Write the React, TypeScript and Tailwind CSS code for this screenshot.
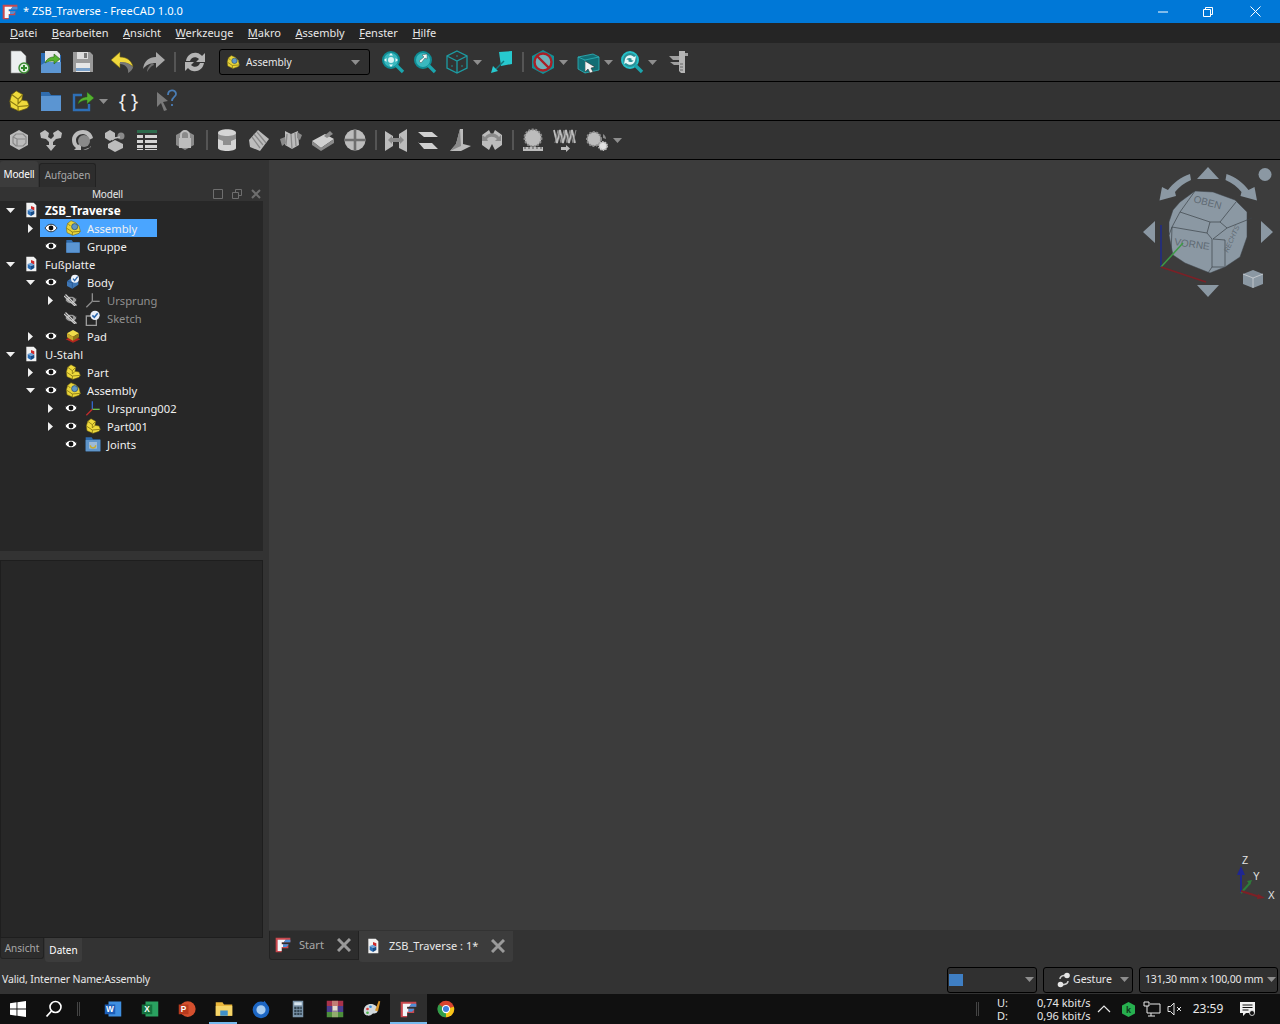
import React from "react";

const MENUS = ["Datei", "Bearbeiten", "Ansicht", "Werkzeuge", "Makro", "Assembly", "Fenster", "Hilfe"];

function Svg({ size = 24, children }: { size?: number; children: React.ReactNode }) {
  return (
    <svg width={size} height={size} viewBox="0 0 24 24" className="block shrink-0">
      {children}
    </svg>
  );
}

function FreeCadLogo({ size = 16 }: { size?: number }) {
  return (
    <Svg size={size}>
      <path d="M1 1h22v7H10v3h10v6H10v6H1z" fill="#c9484e" />
      <path d="M4 4h12l-3 4h-3v3h2v4h-2v6H4z" fill="#f4f6f8" />
      <path d="M16 4h7v4H13zM12 11h8v1l-3 3h-5z" fill="#4d8fd6" />
    </Svg>
  );
}

function DocIcon() {
  return (
    <Svg size={16}>
      <path d="M5 1h11l4 4v18H5z" fill="#f2f2f2" />
      <path d="M12 6l5 2v5l-5-2z" fill="#cf2a2a" />
      <path d="M7 12l5-2 5 3-5 2z" fill="#6da3da" />
      <path d="M7 12l5 3v6l-5-3z" fill="#2a6db5" />
      <path d="M12 15l5-2v5l-5 3z" fill="#174a85" />
    </Svg>
  );
}

function Eye() {
  return (
    <svg width="14" height="10" viewBox="0 0 14 10" className="block">
      <path d="M1 5c3-5 9-5 12 0-3 5-9 5-12 0z" fill="#fff" stroke="#111" strokeWidth="0.8" />
      <circle cx="7" cy="5" r="2.4" fill="#111" />
    </svg>
  );
}

function EyeOff() {
  return (
    <svg width="14" height="12" viewBox="0 0 14 12" className="block">
      <path d="M1 6c3-5 9-5 12 0-3 5-9 5-12 0z" fill="#9a9a9a" stroke="#222" strokeWidth="0.8" />
      <circle cx="7" cy="6" r="2.2" fill="#333" />
      <path d="M1.500 0.500l11 11M0 2l11 10" stroke="#cfcfcf" strokeWidth="1.2" />
    </svg>
  );
}

function PartIcon({ size = 16 }: { size?: number }) {
  return (
    <Svg size={size}>
      <path d="M9 1l7 4-1 6 6 1 2 5-2 3-9 3-9-4-1-7 2-7z" fill="#efda3c" stroke="#6b5f10" strokeWidth="0.8" />
      <path d="M4 5l7 5 5-5M11 10v5l4-4M2 12l9 6 12-1M11 18v5" fill="none" stroke="#8a7a12" strokeWidth="1.300" />
    </Svg>
  );
}

function AssemblyIcon({ size = 16 }: { size?: number }) {
  return (
    <Svg size={size}>
      <path d="M9 1l7 3 5 5 2 8-2 3-9 3-9-4-1-7 2-7z" fill="#e8d43a" stroke="#6b5f10" strokeWidth="0.8" />
      <path d="M2 12l9 6 12-1M11 18v5M4 5l4 4" fill="none" stroke="#8a7a12" strokeWidth="1.300" />
      <circle cx="14.500" cy="10" r="4.600" fill="#5f97c4" stroke="#23456a" />
    </Svg>
  );
}

function FolderIcon({ size = 16 }: { size?: number }) {
  return (
    <Svg size={size}>
      <path d="M2 3h8l2 3h10v16H2z" fill="#2f6cae" />
      <path d="M2 7h20v15H2z" fill="#5b95d2" />
    </Svg>
  );
}

function BodyIcon() {
  return (
    <Svg size={16}>
      <path d="M3 11l8-6 9 2v9l-9 6-8-4z" fill="#3e76b5" />
      <path d="M11 13v9M3 11l8 2 9-6" fill="none" stroke="#214f85" strokeWidth="1" />
      <circle cx="15" cy="7" r="6" fill="#f1f5fb" />
      <path d="M12 7l2.500 3L19 4" fill="none" stroke="#2a66ad" strokeWidth="2" />
    </Svg>
  );
}

function SketchIcon() {
  return (
    <Svg size={16}>
      <path d="M2 9h15v14H2z" fill="none" stroke="#9b9b9b" strokeWidth="2" />
      <circle cx="15" cy="8" r="7" fill="#e9eef6" />
      <path d="M11 8l3 3 5-6" fill="none" stroke="#2a66ad" strokeWidth="2.4" />
    </Svg>
  );
}

function PadIcon() {
  return (
    <Svg size={16}>
      <path d="M1 17l11-5 11 5-11 5z" fill="#b3261e" />
      <path d="M3 8l9-5 9 5-9 5z" fill="#f0dc4a" />
      <path d="M3 8v6l9 5v-6z" fill="#c7a92a" />
      <path d="M21 8v6l-9 5v-6z" fill="#8f7a18" />
    </Svg>
  );
}

function OriginIcon({ color }: { color?: boolean }) {
  return (
    <Svg size={16}>
      <path d="M11 2v12" stroke={color ? "#3565c9" : "#8c8c8c"} strokeWidth="2" />
      <path d="M11 14h11" stroke={color ? "#6cc04a" : "#8c8c8c"} strokeWidth="2" />
      <path d="M11 14L2 23" stroke={color ? "#c12c2c" : "#8c8c8c"} strokeWidth="2" />
    </Svg>
  );
}

function JointsIcon() {
  return (
    <Svg size={16}>
      <path d="M1 2h9l2 3h11v18H1z" fill="#2f6cae" />
      <path d="M1 6h22v17H1z" fill="#5f95c9" />
      <path d="M6 9h12v10H6z" fill="#9dbad6" />
      <path d="M8 14a4 4 0 008 0" fill="none" stroke="#c7ad2c" strokeWidth="2" />
    </Svg>
  );
}

function Arrow({ open }: { open: boolean }) {
  return open ? (
    <svg width="9" height="5" viewBox="0 0 9 5" className="block">
      <path d="M0 0h9L4.500 5z" fill="#f0f0f0" />
    </svg>
  ) : (
    <svg width="5" height="9" viewBox="0 0 5 9" className="block">
      <path d="M0 0v9l5-4.500z" fill="#f0f0f0" />
    </svg>
  );
}

/* --- toolbar icons --- */
function NewDoc() {
  return (
    <Svg>
      <path d="M4 1h10l5 5v17H4z" fill="#eceff0" stroke="#8b8b8b" strokeWidth="0.6" />
      <circle cx="17" cy="18" r="5" fill="#dfeedd" stroke="#3c8a33" strokeWidth="1.4" />
      <path d="M14 18h6M17 15v6" stroke="#2f8a2a" strokeWidth="2" />
    </Svg>
  );
}
function OpenDoc() {
  return (
    <Svg>
      <path d="M2 3h8l2 2h10v18H2z" fill="#2d6eb5" />
      <path d="M6 1h12l3 3v9H6z" fill="#e7e7e7" />
      <path d="M2 15l5-3h15v11H2z" fill="#5d97d3" />
      <path d="M6 13c2-5 6-6 9-6V4l6 5-6 5v-3c-3 0-6 0-9 2z" fill="#57b22f" stroke="#245f18" strokeWidth="0.6" />
    </Svg>
  );
}
function SaveDoc() {
  return (
    <Svg>
      <path d="M2 2h17l3 3v17H2z" fill="#9a9a9a" />
      <path d="M6 2h11v7H6z" fill="#dcdcdc" />
      <path d="M13 3h3v5h-3z" fill="#777" />
      <path d="M5 13h14v9H5z" fill="#e6e6e6" />
      <path d="M5 18h14v3H5z" fill="#7aa0c8" />
    </Svg>
  );
}
function Undo() {
  return (
    <Svg>
      <path d="M1 10l9-8v5c7 0 12 4 13 10-3-3-7-5-13-4v5z" fill="#f0d83c" stroke="#6d6116" strokeWidth="0.6" />
      <path d="M10 12c5 0 9 1 13 5 0 2-3 5-5 6 1-5-3-9-8-9z" fill="#777" />
    </Svg>
  );
}
function Redo() {
  return (
    <Svg>
      <path d="M23 10l-9-8v5C7 7 2 11 1 19c3-4 7-6 13-6v5z" fill="#a8a8a8" />
      <path d="M5 22c0-4 3-8 6-9l1 2c-3 1-5 4-7 7z" fill="#6e6e6e" />
    </Svg>
  );
}
function Refresh() {
  return (
    <Svg>
      <path d="M3 11C4 5 9 2 14 3c2 0 4 2 5 3l3-3v9h-9l3-3c-3-3-8-2-9 2zM21 13c-1 6-6 9-11 8-2 0-4-2-5-3l-3 3v-9h9l-3 3c3 3 8 2 9-2z" fill="#b5b5b5" />
    </Svg>
  );
}
function FitAll() {
  return (
    <Svg>
      <circle cx="10" cy="10" r="8" fill="#3ab8bf" stroke="#0f8c94" strokeWidth="2" />
      <path d="M15 15l7 7" stroke="#1ca5ad" strokeWidth="3.4" />
      <circle cx="10" cy="10" r="3" fill="#d9f3f4" />
      <path d="M10 3l2 2.500H8zM10 17l2-2.500H8zM3 10l2.500-2v4zM17 10l-2.500-2v4z" fill="#e5f8f8" />
    </Svg>
  );
}
function FitSel() {
  return (
    <Svg>
      <circle cx="10" cy="10" r="8" fill="#3ab8bf" stroke="#0f8c94" strokeWidth="2" />
      <path d="M15 15l7 7" stroke="#1ca5ad" strokeWidth="3.4" />
      <path d="M14 4v5l-2-1-4 5-2-2 5-4-2-2z" fill="#eef9f9" stroke="#333" strokeWidth="0.4" />
    </Svg>
  );
}
function IsoCube() {
  return (
    <Svg>
      <path d="M12 1l10 5v12l-10 5-10-5V6z M2 6l10 5 10-5M12 11v12" fill="none" stroke="#1d9ca3" strokeWidth="1.3" />
      <circle cx="12" cy="6" r="0.8" fill="#1d9ca3" />
      <circle cx="7" cy="16" r="0.8" fill="#1d9ca3" />
      <circle cx="17" cy="16" r="0.8" fill="#1d9ca3" />
    </Svg>
  );
}
function PlaneArrow() {
  return (
    <Svg>
      <path d="M9 2l13-1v13l-11 2z" fill="#27c9cf" />
      <path d="M14 11L4 21" stroke="#12757b" strokeWidth="1.5" />
      <path d="M1 23l2-7 5 5z" fill="#27c9cf" />
    </Svg>
  );
}
function NoSign() {
  return (
    <Svg>
      <path d="M12 0l11 6v12l-11 6-11-6V6z" fill="#148e95" />
      <circle cx="12" cy="12" r="8.500" fill="#6fb2b9" stroke="#a91f25" strokeWidth="2.400" />
      <path d="M6 6l12 12" stroke="#a91f25" strokeWidth="2.400" />
    </Svg>
  );
}
function CubeCursor() {
  return (
    <Svg>
      <path d="M2 7l15-3 6 3v13l-14 3-7-4z" fill="#136d74" stroke="#2db5bb" strokeWidth="0.8" />
      <path d="M2 7l7 3 14-3M9 10v13" fill="none" stroke="#2db5bb" strokeWidth="0.8" />
      <path d="M9 11l10 6-4 1 2 4-3 1-2-4-3 3z" fill="#f1f1f1" stroke="#222" strokeWidth="0.5" />
    </Svg>
  );
}
function SyncZoom() {
  return (
    <Svg>
      <circle cx="10" cy="10" r="8" fill="#2a8f96" stroke="#26c1c8" strokeWidth="2" />
      <path d="M15 15l7 7" stroke="#1ca5ad" strokeWidth="3.400" />
      <path d="M5 9c1-4 6-5 9-2l2-1-1 5-4-1 1-1c-2-2-5-1-6 1zM15 11c-1 4-6 5-9 2l-2 1 1-5 4 1-1 1c2 2 5 1 6-1z" fill="#e5f8f8" />
    </Svg>
  );
}
function Caliper() {
  return (
    <Svg>
      <path d="M13 1h6v22h-4l-2-2z" fill="#b5b5b5" />
      <path d="M3 6h10v4H7zM4 12h9v3H8zM19 3h3v3h-3z" fill="#a0a0a0" />
      <path d="M14 14h3M14 17h3M14 20h3" stroke="#666" strokeWidth="1" />
    </Svg>
  );
}
function ShareArrow() {
  return (
    <Svg>
      <path d="M18 15v6H3V6h8" fill="none" stroke="#2e6fb6" strokeWidth="2.400" />
      <path d="M7 15c1-5 5-7 9-7V3l7 6-7 6v-4c-3 0-6 1-9 4z" fill="#55b130" stroke="#255f18" strokeWidth="0.5" />
    </Svg>
  );
}
function WhatsThis() {
  return (
    <Svg>
      <path d="M2 3l11 9-5 1 4 8-3 1-3-8-4 4z" fill="#7a7a7a" />
      <path d="M13 6c0-6 8-6 8-1 0 3-4 3-4 7M17 15v2" fill="none" stroke="#4a7db5" strokeWidth="1.800" />
    </Svg>
  );
}

const G = "#bcbcbc";
const GD = "#8a8a8a";

function GrayCube() {
  return (
    <Svg>
      <path d="M12 2l9 5v10l-9 5-9-5V7z" fill={G} />
      <path d="M9 6h7l3 3v6l-3 3H9l-3-3V9zM6 9l4 2h8M10 11v7" fill="none" stroke={GD} strokeWidth="1.200" />
    </Svg>
  );
}
function GrayBranch() {
  return (
    <Svg>
      <path d="M1 5l5-3 4 3-1 4 3 2 3-3-1-3 5-3 4 3-1 5-5 1-3 3v3h3l-5 6-5-6h3v-3L7 11 2 10z" fill={G} />
    </Svg>
  );
}
function GrayCycle() {
  return (
    <Svg>
      <path d="M12 2c5 0 9 3 10 8l-4 2c-1-4-3-6-6-6-4 0-7 3-7 6 0 2 1 4 2 5l3-2v7H3l2-2c-3-2-4-5-4-8C1 6 6 2 12 2z" fill={G} />
      <circle cx="13" cy="13" r="6" fill={GD} />
      <path d="M20 13v5c-2 3-5 4-8 4l8-3z" fill={G} />
    </Svg>
  );
}
function GrayParts() {
  return (
    <Svg>
      <path d="M7 2l5 3v5l-5 3-5-3V5z" fill={G} />
      <circle cx="18" cy="8" r="3.500" fill={GD} />
      <path d="M12 12l8 4v4l-8 4-7-4v-4z" fill={G} />
      <path d="M9 12l3-2 5-1" stroke={G} strokeWidth="1.500" fill="none" />
    </Svg>
  );
}
function GrayTable() {
  return (
    <Svg>
      <path d="M2 2h20v3H2z" fill="#2c6b4c" />
      <path d="M2 7h6v3H2zM10 7h12v3H10zM2 12h6v3H2zM10 12h12v3H10zM2 17h6v3H2zM10 17h12v3H10zM2 21h6v1H2zM10 21h12v1H10z" fill="#d5d5d5" />
    </Svg>
  );
}
function GrayLock() {
  return (
    <Svg>
      <path d="M12 2l9 5v10l-9 5-9-5V7z" fill={GD} />
      <path d="M8 10V7a4 4 0 018 0v3" fill="none" stroke={G} strokeWidth="2" />
      <path d="M6 10h12v10H6z" fill={G} />
    </Svg>
  );
}
function GrayCyl() {
  return (
    <Svg>
      <path d="M3 5c0-5 18-5 18 0v15c0 4-18 4-18 0z" fill="#d5d5d5" />
      <path d="M3 5c0 4 18 4 18 0v6l-5 2v4H8v-4l-5-2z" fill="#8f8f8f" />
    </Svg>
  );
}
function GrayLathe() {
  return (
    <Svg>
      <path d="M2 12l9-10 11 9-9 12-10-4z" fill={G} />
      <path d="M7 6l9 11M10 4l9 11M5 9l8 11" stroke={GD} strokeWidth="1.300" />
    </Svg>
  );
}
function GrayAxis() {
  return (
    <Svg>
      <path d="M6 3l6 3 7-3 1 14-7 4-7-4z" fill={G} />
      <path d="M12 6l1 15M8 6l-1 11M16 5l1 13" stroke={GD} strokeWidth="1.300" />
      <path d="M1 11l5-2 1 6-4 3zM18 4l5 3-2 5-3-2z" fill={GD} />
    </Svg>
  );
}
function GrayBoxes() {
  return (
    <Svg>
      <path d="M1 13L14 6l9 5-13 9z" fill="#d0d0d0" />
      <path d="M1 13l9 7v3L1 17zM23 11v4L10 23v-3z" fill={GD} />
      <path d="M13 8l6-5 3 3-6 4z" fill={GD} />
    </Svg>
  );
}
function GrayBall() {
  return (
    <Svg>
      <circle cx="12" cy="12" r="10.500" fill={G} />
      <path d="M1 12h22M12 1v22" stroke="#6f6f6f" strokeWidth="2.600" />
    </Svg>
  );
}
function GrayMirror() {
  return (
    <Svg>
      <path d="M1 3l8 5v10l-8 5zM23 1l-8 5v14l8 4z" fill={G} />
      <path d="M4 12l4-4v2h8V8l4 4-4 4v-2H8v2z" fill={GD} />
    </Svg>
  );
}
function GrayChamfer() {
  return (
    <Svg>
      <path d="M2 4h14l6 5H8zM2 14l14 1 6 6H8z" fill="#d0d0d0" />
      <path d="M8 9h14l-6 6H2z" fill="#2f2f2f" />
    </Svg>
  );
}
function GrayAngle() {
  return (
    <Svg>
      <path d="M12 1h3v15l8 2-10 5H2l6-7z" fill={G} />
      <path d="M12 1l-4 15-6 7 11-5z" fill={GD} />
    </Svg>
  );
}
function GrayFlex() {
  return (
    <Svg>
      <path d="M2 7l7-5 3 6v8l-3 6-7-5zM22 7l-7-5-3 6v8l3 6 7-5z" fill={G} />
      <path d="M5 9c4-5 10-5 14 0l2-2v6h-6l2-2c-3-3-8-3-10 0l1 2H2V7z" fill={GD} />
    </Svg>
  );
}
function GrayGear() {
  return (
    <Svg>
      <circle cx="12" cy="10" r="8.500" fill={G} stroke={GD} strokeWidth="2" strokeDasharray="2 1.500" />
      <path d="M2 19h20v4H2z" fill={G} />
      <path d="M4 19v2M8 19v2M12 19v2M16 19v2M20 19v2" stroke="#555" strokeWidth="1" />
    </Svg>
  );
}
function GraySpring() {
  return (
    <Svg>
      <path d="M1 2l3 13 3-13 3 13 3-13 3 13 3-13 3 13" fill="none" stroke={G} strokeWidth="1.800" />
      <path d="M2 15L5 2l3 13 3-13 3 13 3-13 3 13 3-13" fill="none" stroke={GD} strokeWidth="1.100" />
      <path d="M8 19h5v-2l4 3.500-4 3.500v-2H8z" fill={G} />
    </Svg>
  );
}
function GrayGears() {
  return (
    <Svg>
      <circle cx="9" cy="11" r="7" fill={G} stroke={GD} strokeWidth="2" strokeDasharray="2 1.500" />
      <circle cx="18" cy="18" r="4" fill="#e2e2e2" stroke={G} strokeWidth="2" strokeDasharray="1.500 1" />
      <path d="M18 6c2 1 3 3 3 5l-3-1z" fill={GD} />
    </Svg>
  );
}

function Btn({ children }: { children: React.ReactNode }) {
  return <div className="flex h-8 w-8 shrink-0 items-center justify-center">{children}</div>;
}

function Sep() {
  return <div className="ml-[4px] mr-[3px] h-[20px] w-[2px] shrink-0 bg-[#555555]" />;
}

function Drop() {
  return (
    <svg width="9" height="5" viewBox="0 0 9 5" className="block shrink-0">
      <path d="M0 0h9L4.500 5z" fill="#8e8e8e" />
    </svg>
  );
}

function Toolbar({ children }: { children: React.ReactNode }) {
  return <div className="flex h-[39px] items-center border-b border-black bg-[#333333] pl-[3px]">{children}</div>;
}

type Row = {
  level: 0 | 1 | 2;
  label: string;
  arrow?: "open" | "closed";
  eye?: "on" | "off";
  icon: React.ReactNode;
  bold?: boolean;
  selected?: boolean;
  dim?: boolean;
};

const INDENT = ["w-0", "w-5", "w-10"];

const ROWS: Row[] = [
  { level: 0, label: "ZSB_Traverse", arrow: "open", icon: <DocIcon />, bold: true },
  { level: 1, label: "Assembly", arrow: "closed", eye: "on", icon: <AssemblyIcon />, selected: true },
  { level: 1, label: "Gruppe", eye: "on", icon: <FolderIcon /> },
  { level: 0, label: "Fußplatte", arrow: "open", icon: <DocIcon /> },
  { level: 1, label: "Body", arrow: "open", eye: "on", icon: <BodyIcon /> },
  { level: 2, label: "Ursprung", arrow: "closed", eye: "off", icon: <OriginIcon />, dim: true },
  { level: 2, label: "Sketch", eye: "off", icon: <SketchIcon />, dim: true },
  { level: 1, label: "Pad", arrow: "closed", eye: "on", icon: <PadIcon /> },
  { level: 0, label: "U-Stahl", arrow: "open", icon: <DocIcon /> },
  { level: 1, label: "Part", arrow: "closed", eye: "on", icon: <PartIcon /> },
  { level: 1, label: "Assembly", arrow: "open", eye: "on", icon: <AssemblyIcon /> },
  { level: 2, label: "Ursprung002", arrow: "closed", eye: "on", icon: <OriginIcon color /> },
  { level: 2, label: "Part001", arrow: "closed", eye: "on", icon: <PartIcon /> },
  { level: 2, label: "Joints", eye: "on", icon: <JointsIcon /> },
];

function TreeRow({ row }: { row: Row }) {
  return (
    <div className="flex h-[18px] items-center">
      <div className={INDENT[row.level]} />
      <div className="flex h-[18px] w-5 items-center justify-center">
        {row.arrow && <Arrow open={row.arrow === "open"} />}
      </div>
      <div className={`flex h-[18px] items-center pr-5 ${row.selected ? "bg-[#4aa5ff]" : ""}`}>
        {row.eye && (
          <div className="flex w-[22px] justify-center">{row.eye === "on" ? <Eye /> : <EyeOff />}</div>
        )}
        <div className="flex w-[22px] justify-center">{row.icon}</div>
        <span
          className={`pl-[3px] pt-[1px] leading-[17px] ${row.bold ? "text-[11.7px] font-bold text-white" : "text-[11.2px]"} ${
            row.dim ? "text-[#8f8f8f]" : "text-[#f0f0f0]"
          }`}
        >
          {row.label}
        </span>
      </div>
    </div>
  );
}

function NaviCube() {
  const c = "#8b98a3";
  const e = "#3c4349";
  const t = "#5f6a73";
  return (
    <svg width="150" height="145" viewBox="0 0 150 145" className="block">
      <path d="M78 7l11 12H67z" fill={c} />
      <path d="M29.500 40.500L32 27l6 3c5-7 13-13 22-16l1 6c-7 3-12 7-16 12l1 4z" fill={c} />
      <path d="M127 40.500L124.500 27l-6 3c-5-7-13-13-22-16l-1 6c7 3 12 7 16 12l-1 4z" fill={c} />
      <path d="M13 72l12-11v22zM143 72l-12-11v22zM67 125h22l-11 12z" fill={c} />
      <circle cx="135" cy="14.500" r="6.500" fill={c} />
      <path d="M65 31l18 1 22 8 12 12v25l-7 20-15 10-15 6-25-10-12-8-4-20V62l4-12 7-8z" fill={c} stroke={e} strokeWidth="0.5" />
      <path
        d="M50 52L65 31M50 52l30 10h10l16-20M50 52l-8 15 35 6 3-11M42 67l-3 8M42 67l-1 28M77 73l5 6v28l-4 6M90 62l7 6 25-10M97 68L83 79l12 1v26M82 107h13"
        fill="none"
        stroke={e}
        strokeWidth="0.700"
      />
      <text transform="translate(63 42) rotate(15)" fontSize="10" fill={t} fontFamily="Liberation Sans, sans-serif">
        OBEN
      </text>
      <text transform="translate(44 85) rotate(8)" fontSize="10" fill={t} fontFamily="Liberation Sans, sans-serif">
        VORNE
      </text>
      <text transform="translate(98 93) rotate(-66)" fontSize="7" fontStyle="italic" fill={t} fontFamily="Liberation Sans, sans-serif">
        RECHTS
      </text>
      <path d="M31 107V65" stroke="#1e2a8a" strokeWidth="1.500" />
      <path d="M31 107L53 83" stroke="#3d9a46" strokeWidth="1.500" />
      <path d="M31 107l45 15" stroke="#7c2026" strokeWidth="1.500" />
      <path d="M113 114l10-4 10 4v10l-10 4-10-4z" fill={c} />
      <path d="M113 114l10 4 10-4M123 118v10" fill="none" stroke="#e5e5e5" strokeWidth="0.600" />
    </svg>
  );
}

function AxisCross() {
  return (
    <svg width="60" height="60" viewBox="0 0 60 60" className="block">
      <path d="M21 48V26" stroke="#1f2690" strokeWidth="2" />
      <path d="M21 21l-4 9h8z" fill="#1f2690" />
      <path d="M21 48l9-10" stroke="#2d7c3a" strokeWidth="2" />
      <path d="M32 35l-5 1 3 4z" fill="#2d7c3a" />
      <path d="M21 46l19 6" stroke="#7c2026" strokeWidth="2" />
      <path d="M45 53l-7-4-1 5z" fill="#7c2026" />
      <text x="22" y="19" fontSize="10" fill="#e5e5e5" fontFamily="Liberation Sans, sans-serif">Z</text>
      <text x="33" y="35" fontSize="10" fill="#e5e5e5" fontFamily="Liberation Sans, sans-serif">Y</text>
      <text x="48" y="54" fontSize="10" fill="#e5e5e5" fontFamily="Liberation Sans, sans-serif">X</text>
    </svg>
  );
}

function CloseX() {
  return (
    <svg width="14" height="14" viewBox="0 0 14 14" className="block shrink-0">
      <path d="M1 1l12 12M13 1L1 13" stroke="#9a9a9a" strokeWidth="3" />
    </svg>
  );
}

function StatusCombo({ className, children }: { className: string; children: React.ReactNode }) {
  return (
    <div className={`flex h-[26px] items-center rounded-[3px] border border-black bg-[#303030] ${className}`}>
      {children}
    </div>
  );
}

function TaskIcon({ children, className = "" }: { children: React.ReactNode; className?: string }) {
  return <div className={`flex h-[30px] w-[37px] shrink-0 items-center justify-center ${className}`}>{children}</div>;
}

function TaskLetterIcon({ bg, side, letter }: { bg: string; side: string; letter: string }) {
  return (
    <Svg size={18}>
      <path d="M6 2h17v20H6z" fill={side} />
      <path d="M1 6h14v13H1z" fill={bg} />
      <text x="8" y="16.500" textAnchor="middle" fontSize="11" fontWeight="700" fill="#fff" fontFamily="Liberation Sans, sans-serif">
        {letter}
      </text>
    </Svg>
  );
}

function Taskbar() {
  return (
    <div className="flex h-[30px] items-center bg-[#101010] text-[#e8e8e8]">
      <div className="flex h-[30px] w-[35px] items-center justify-center">
        <svg width="16" height="16" viewBox="0 0 16 16" className="block">
          <path d="M0 2.200l6.500-.9v6.200H0zM7.400 1.200L16 0v7.500H7.400zM0 8.500h6.500v6.200L0 13.800zM7.400 8.500H16V16l-8.600-1.200z" fill="#fff" />
        </svg>
      </div>
      <div className="flex h-[30px] w-[38px] items-center justify-center">
        <svg width="18" height="18" viewBox="0 0 18 18" className="block">
          <circle cx="10.500" cy="7" r="5.500" fill="none" stroke="#fff" strokeWidth="1.600" />
          <path d="M6.500 11L1.500 16.500" stroke="#fff" strokeWidth="1.800" />
        </svg>
      </div>
      <div className="ml-[4px] h-[14px] w-[3px] border-x border-[#444444]" />
      <div className="ml-[14px] flex">
        <TaskIcon>
          <TaskLetterIcon bg="#1d5eb8" side="#3f8fe0" letter="W" />
        </TaskIcon>
        <TaskIcon>
          <TaskLetterIcon bg="#14733e" side="#2aa160" letter="X" />
        </TaskIcon>
        <TaskIcon>
          <Svg size={18}>
            <circle cx="13" cy="12" r="10.500" fill="#d5502e" />
            <path d="M1 6h13v13H1z" fill="#b83a1d" />
            <text x="7.500" y="16.500" textAnchor="middle" fontSize="11" fontWeight="700" fill="#fff" fontFamily="Liberation Sans, sans-serif">
              P
            </text>
          </Svg>
        </TaskIcon>
        <TaskIcon className="relative">
          <Svg size={18}>
            <path d="M1 3h9l2 3h11v15H1z" fill="#e9b63b" />
            <path d="M1 8h22v13H1z" fill="#f6d568" />
            <path d="M7 14h10v7H7z" fill="#3f8fc9" />
          </Svg>
          <div className="absolute bottom-0 left-[4px] h-[2px] w-[28px] bg-[#76b9ed]" />
        </TaskIcon>
        <TaskIcon>
          <Svg size={20}>
            <circle cx="12" cy="13" r="10" fill="#1c66c4" />
            <path d="M16 2c3 3 4 6 3 9l-5-5z" fill="#1c66c4" />
            <circle cx="12" cy="13" r="5.500" fill="#a9cdf0" />
          </Svg>
        </TaskIcon>
        <TaskIcon>
          <Svg size={18}>
            <path d="M5 1h14v22H5z" fill="#7c95ab" />
            <path d="M7 3h10v4H7z" fill="#d5e3ee" />
            <path d="M7 9h3v3H7zM11 9h3v3h-3zM15 9h2v3h-2zM7 13h3v3H7zM11 13h3v3h-3zM15 13h2v3h-2zM7 17h3v3H7zM11 17h3v3h-3zM15 17h2v3h-2z" fill="#30424f" />
          </Svg>
        </TaskIcon>
        <TaskIcon>
          <Svg size={18}>
            <path d="M1 1h22v7H1z" fill="#a8324b" />
            <path d="M1 8h22v8H1z" fill="#4b3d8f" />
            <path d="M1 16h22v7H1z" fill="#4d8f3c" />
            <path d="M8 1h8v22H8z" fill="#d8c9a0" fillOpacity="0.5" />
            <path d="M9 8h6v6H9z" fill="#e5e0d0" />
          </Svg>
        </TaskIcon>
        <TaskIcon>
          <Svg size={18}>
            <path d="M1 15C1 7 8 4 14 6c6 2 7 7 5 10-2 3-5 1-7 3-2 3-11 3-11-4z" fill="#d2d8dc" />
            <circle cx="6" cy="12" r="1.800" fill="#d93f3f" />
            <circle cx="10" cy="9" r="1.800" fill="#3f8fd9" />
            <circle cx="6" cy="17" r="1.800" fill="#4db34d" />
            <path d="M16 14L21 1l2 1-3 13z" fill="#d9962b" />
          </Svg>
        </TaskIcon>
        <TaskIcon className="relative bg-[#2e2e2e]">
          <FreeCadLogo size={17} />
          <div className="absolute inset-x-0 bottom-0 h-[2px] bg-[#76b9ed]" />
        </TaskIcon>
        <TaskIcon>
          <Svg size={18}>
            <circle cx="12" cy="12" r="11" fill="#d8442f" />
            <path d="M12 12L22.500 9A11 11 0 0112 23z" fill="#f5c518" />
            <path d="M12 12L12 23A11 11 0 012.500 6z" fill="#2f9e4a" />
            <circle cx="12" cy="12" r="5.500" fill="#fff" />
            <circle cx="12" cy="12" r="4" fill="#3f7fe0" />
          </Svg>
        </TaskIcon>
      </div>
      <div className="flex-1" />
      <div className="h-[14px] w-[3px] border-x border-[#444444]" />
      <div className="ml-[18px] w-[40px] text-[11px] leading-[13px]">
        <div>U:</div>
        <div>D:</div>
      </div>
      <div className="w-[50px] text-[11px] leading-[13px] whitespace-nowrap">
        <div>0,74 kbit/s</div>
        <div>0,96 kbit/s</div>
      </div>
      <div className="ml-[5px] w-[24px]">
        <svg width="14" height="8" viewBox="0 0 14 8" className="mx-auto block">
          <path d="M1 7l6-6 6 6" fill="none" stroke="#e8e8e8" strokeWidth="1.200" />
        </svg>
      </div>
      <div className="w-[24px]">
        <svg width="15" height="15" viewBox="0 0 15 15" className="mx-auto block">
          <path d="M7.500 0l6.500 3.500v8L7.500 15 1 11.500v-8z" fill="#27b04f" />
          <text x="7.500" y="11" textAnchor="middle" fontSize="9" fontWeight="700" fill="#0d3b1c" fontFamily="Liberation Sans, sans-serif">
            k
          </text>
        </svg>
      </div>
      <div className="w-[24px]">
        <svg width="18" height="16" viewBox="0 0 18 16" className="mx-auto block">
          <path d="M1 1h5v4H1zM4 5v7h13V3H7M8 12v3M5 15h7" fill="none" stroke="#e8e8e8" strokeWidth="1" />
        </svg>
      </div>
      <div className="w-[22px]">
        <svg width="16" height="14" viewBox="0 0 16 14" className="mx-auto block">
          <path d="M1 4.500h2.500L7 1v12L3.500 9.500H1zM10 5l4 4M14 5l-4 4" fill="none" stroke="#e8e8e8" strokeWidth="1" />
        </svg>
      </div>
      <div className="w-[44px] text-center text-[12px] leading-[30px]">23:59</div>
      <div className="flex w-[35px] justify-center">
        <svg width="17" height="16" viewBox="0 0 17 16" className="block">
          <path d="M1 1h15v11H7l-3 3v-3H1z" fill="#f0f0f0" />
          <path d="M3.500 4h10M3.500 6.500h10M3.500 9h6" stroke="#101010" strokeWidth="1" />
          <circle cx="13" cy="12" r="2.500" fill="#101010" stroke="#f0f0f0" strokeWidth="0.800" />
        </svg>
      </div>
      <div className="w-[15px]" />
    </div>
  );
}

export default function App() {
  return (
    <div className="flex h-[1024px] w-[1280px] flex-col overflow-hidden bg-[#333333] font-['Noto_Sans',sans-serif] text-[11px] text-[#e8e8e8]">
      {/* title bar */}
      <div className="flex h-[23px] items-center bg-[#0078d7] text-white">
        <div className="flex w-[23px] justify-center pr-[3px]">
          <FreeCadLogo size={16} />
        </div>
        <span className="text-[11.1px]">* ZSB_Traverse - FreeCAD 1.0.0</span>
        <div className="flex-1" />
        <div className="flex w-[45px] justify-center">
          <svg width="10" height="10" viewBox="0 0 10 10" className="block">
            <path d="M0 5h10" stroke="#fff" />
          </svg>
        </div>
        <div className="flex w-[45px] justify-center">
          <svg width="10" height="10" viewBox="0 0 10 10" className="block">
            <path d="M.5 2.500h7v7h-7zM2.500 2.500v-2h7v7h-2" fill="none" stroke="#fff" />
          </svg>
        </div>
        <div className="flex w-[50px] justify-center">
          <svg width="11" height="11" viewBox="0 0 11 11" className="block">
            <path d="M.5.500l10 10M10.500.500l-10 10" stroke="#fff" />
          </svg>
        </div>
      </div>

      {/* menu */}
      <div className="flex h-[20px] items-center gap-[14.5px] bg-[#252525] pl-[10px] leading-[20px]">
        {MENUS.map((m) => (
          <span key={m}>
            <span className="underline">{m[0]}</span>
            {m.slice(1)}
          </span>
        ))}
      </div>

      <Toolbar>
        <Btn><NewDoc /></Btn>
        <Btn><OpenDoc /></Btn>
        <Btn><SaveDoc /></Btn>
        <div className="w-[7px]" />
        <Btn><Undo /></Btn>
        <Btn><Redo /></Btn>
        <Sep />
        <Btn><Refresh /></Btn>
        <div className="ml-2 flex h-[26px] w-[151px] items-center rounded-[3px] border border-black bg-[#303030] pl-[6px] pr-[9px]">
          <AssemblyIcon size={14} />
          <span className="ml-[6px] flex-1 pt-[1px] text-[10.2px]">Assembly</span>
          <Drop />
        </div>
        <div className="w-[7px]" />
        <Btn><FitAll /></Btn>
        <Btn><FitSel /></Btn>
        <Btn><IsoCube /></Btn>
        <Drop />
        <div className="w-[4px]" />
        <Btn><PlaneArrow /></Btn>
        <Sep />
        <Btn><NoSign /></Btn>
        <Drop />
        <div className="w-[4px]" />
        <Btn><CubeCursor /></Btn>
        <Drop />
        <div className="w-[3px]" />
        <Btn><SyncZoom /></Btn>
        <Drop />
        <div className="w-[5px]" />
        <Btn><Caliper /></Btn>
      </Toolbar>

      <Toolbar>
        <Btn><PartIcon size={22} /></Btn>
        <Btn><FolderIcon size={24} /></Btn>
        <Btn><ShareArrow /></Btn>
        <Drop />
        <div className="w-[10px]" />
        <span className="w-[21px] whitespace-nowrap text-center text-[19px] leading-none text-[#f0f0f0]">{"{ }"}</span>
        <div className="w-[12px]" />
        <Btn><WhatsThis /></Btn>
      </Toolbar>

      <Toolbar>
        <Btn><GrayCube /></Btn>
        <Btn><GrayBranch /></Btn>
        <Btn><GrayCycle /></Btn>
        <Btn><GrayParts /></Btn>
        <Btn><GrayTable /></Btn>
        <div className="w-[6px]" />
        <Btn><GrayLock /></Btn>
        <div className="w-[1px]" />
        <Sep />
        <Btn><GrayCyl /></Btn>
        <Btn><GrayLathe /></Btn>
        <Btn><GrayAxis /></Btn>
        <Btn><GrayBoxes /></Btn>
        <Btn><GrayBall /></Btn>
        <Sep />
        <Btn><GrayMirror /></Btn>
        <Btn><GrayChamfer /></Btn>
        <Btn><GrayAngle /></Btn>
        <Btn><GrayFlex /></Btn>
        <Sep />
        <Btn><GrayGear /></Btn>
        <Btn><GraySpring /></Btn>
        <Btn><GrayGears /></Btn>
        <Drop />
      </Toolbar>

      {/* main area */}
      <div className="flex h-[805px] gap-[6px]">
        <div className="flex w-[263px] shrink-0 flex-col">
          <div className="flex h-[27px] items-end gap-[1px] text-[10px]">
            <div className="flex h-[26px] w-[38px] items-center justify-center rounded-t-[3px] bg-[#3c3c3c] tracking-[-0.2px] text-white">
              Modell
            </div>
            <div className="flex h-[24px] w-[57px] items-center justify-center rounded-t-[3px] border border-b-0 border-[#222222] bg-[#2d2d2d] text-[#a8a8a8]">
              Aufgaben
            </div>
          </div>
          <div className="relative flex h-[14px] items-center bg-[#333333] pl-[92px] text-[10px] leading-none tracking-[-0.2px]">
            Modell
            <div className="absolute right-[2px] flex items-center gap-[9px]">
              <svg width="10" height="10" viewBox="0 0 10 10" className="block">
                <path d="M.5.500h9v9h-9z" fill="none" stroke="#6e6e6e" />
              </svg>
              <svg width="10" height="10" viewBox="0 0 10 10" className="block">
                <path d="M.5 3.500h6v6h-6zM3.500 3.500v-3h6v6h-3" fill="none" stroke="#6e6e6e" />
              </svg>
              <svg width="10" height="10" viewBox="0 0 10 10" className="block">
                <path d="M1 1l8 8M9 1L1 9" stroke="#6e6e6e" strokeWidth="2" />
              </svg>
            </div>
          </div>
          <div className="h-[350px] bg-[#272727]">
            {ROWS.map((r, i) => (
              <TreeRow key={i} row={r} />
            ))}
          </div>
          <div className="h-[9px]" />
          <div className="h-[378px] border border-[#1e1e1e] bg-[#272727]" />
          <div className="flex h-[27px] items-start gap-[1px] text-[10px]">
            <div className="flex h-[21px] w-[44px] items-center justify-center rounded-b-[3px] border border-t-0 border-[#222222] bg-[#2d2d2d] pt-[1px] text-[#a8a8a8]">
              Ansicht
            </div>
            <div className="flex h-[24px] w-[37px] items-center justify-center rounded-b-[3px] bg-[#3c3c3c] pt-[1px] text-white">
              Daten
            </div>
          </div>
        </div>

        <div className="flex min-w-0 flex-1 flex-col">
          <div className="relative h-[770px] bg-[#3c3c3c]">
            <div className="absolute right-0 top-0">
              <NaviCube />
            </div>
            <div className="absolute bottom-[25px] right-0">
              <AxisCross />
            </div>
          </div>
          <div className="flex h-[35px] items-start">
            <div className="mt-[1px] flex h-[29px] w-[90px] items-center rounded-bl-[3px] border border-t-0 border-[#222222] bg-[#2d2d2d] pl-[5px]">
              <FreeCadLogo size={16} />
              <span className="ml-[8px] flex-1 pt-[1px] text-[11.1px] text-[#a8a8a8]">Start</span>
              <div className="mr-[7px]"><CloseX /></div>
            </div>
            <div className="mt-[1px] flex h-[31px] w-[154px] items-center rounded-b-[3px] bg-[#3c3c3c] pl-[6px] pb-[1px]">
              <DocIcon />
              <span className="ml-[8px] flex-1 whitespace-nowrap text-[11px]">ZSB_Traverse : 1*</span>
              <div className="mr-[8px]"><CloseX /></div>
            </div>
          </div>
        </div>
      </div>

      {/* status bar */}
      <div className="flex h-[29px] items-center bg-[#333333] pl-[2px]">
        <span className="w-[945px] text-[10.5px] tracking-[-0.15px]">Valid, Interner Name:Assembly</span>
        <StatusCombo className="w-[90px] pl-[1px] pr-[2px]">
          <div className="h-[12px] w-[14px] bg-[#3f7fc4]" />
          <div className="flex-1" />
          <Drop />
        </StatusCombo>
        <div className="w-[6px]" />
        <StatusCombo className="w-[90px] pl-[12px] pr-[3px]">
          <svg width="16" height="16" viewBox="0 0 16 16" className="block shrink-0">
            <path d="M4 7c0-4 4-3 6-4M12 9c0 4-4 3-6 4" fill="none" stroke="#cfcfcf" strokeWidth="1.500" />
            <circle cx="11" cy="3.500" r="2.800" fill="#e6e6e6" />
            <circle cx="4.500" cy="12.500" r="2.800" fill="#e6e6e6" />
          </svg>
          <span className="ml-[1px] flex-1 text-[10.5px]">Gesture</span>
          <Drop />
        </StatusCombo>
        <div className="w-[6px]" />
        <StatusCombo className="w-[139px] pl-[5px] pr-[1px]">
          <span className="flex-1 whitespace-nowrap text-[10.5px] tracking-[-0.15px]">131,30 mm x 100,00 mm</span>
          <Drop />
        </StatusCombo>
      </div>

      <Taskbar />
    </div>
  );
}
